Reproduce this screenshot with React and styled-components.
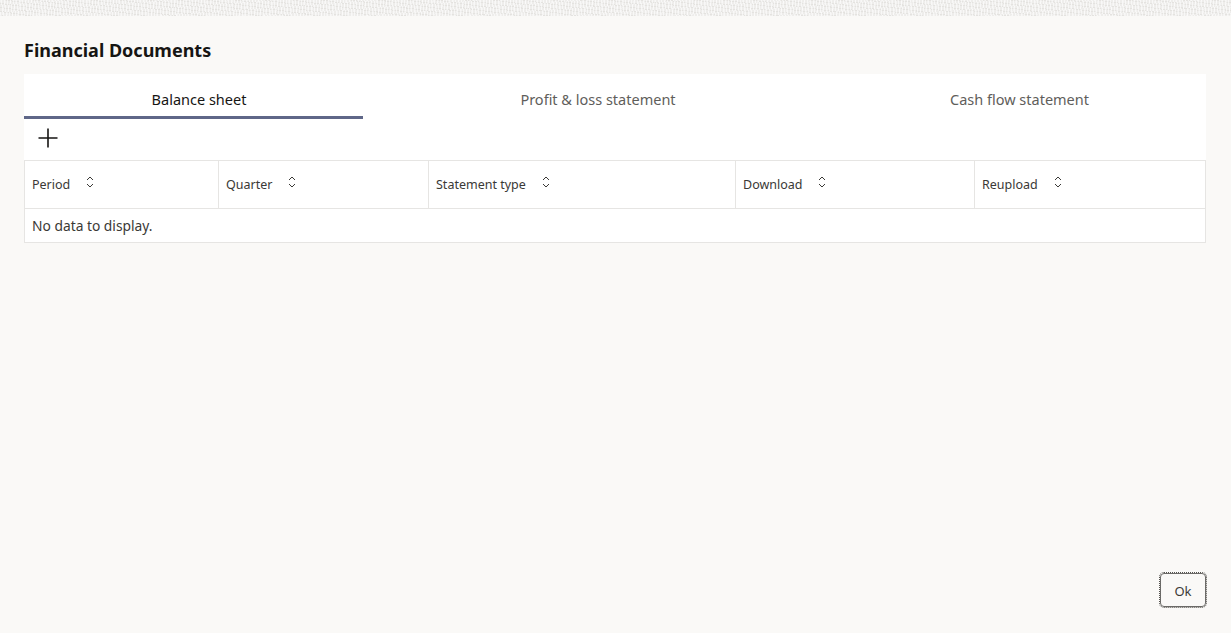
import React from 'react';
import styled, { createGlobalStyle } from 'styled-components';

const GlobalStyle = createGlobalStyle`
  html, body {
    margin: 0;
    padding: 0;
    height: 100%;
    background: #faf9f7;
    font-family: "Noto Sans", "Open Sans", sans-serif;
  }
  #root {
    height: 100%;
  }
`;

const Page = styled.div`
  height: 633px;
  display: flex;
  flex-direction: column;
  overflow: hidden;
`;

const TextureStrip = styled.div`
  height: 16px;
  flex: none;
  background-color: #eeedeb;
  background-image:
    repeating-linear-gradient(82deg, rgba(255, 255, 255, 0.6) 0 1px, transparent 1px 3px),
    repeating-linear-gradient(104deg, rgba(255, 255, 255, 0.35) 0 1px, transparent 1px 5px),
    repeating-linear-gradient(8deg, rgba(216, 214, 210, 0.45) 0 1px, transparent 1px 4px);
`;

const Body = styled.main`
  flex: 1;
  display: flex;
  flex-direction: column;
  padding: 0 25px 25px 24px;
`;

const Title = styled.h1`
  margin: 21px 0 11px;
  font-size: 18px;
  line-height: 26px;
  font-weight: 700;
  color: #161513;
`;

const Card = styled.section`
  background: #fff;
`;

const Tabs = styled.div`
  display: grid;
  grid-template-columns: 339px 470px 373px;
  height: 45px;
`;

const Tab = styled.div`
  display: flex;
  align-items: center;
  justify-content: center;
  padding-top: 8px;
  padding-left: ${(p) => (p.$active ? '11px' : '0')};
  font-size: 14.5px;
  color: ${(p) => (p.$active ? '#161513' : '#5f5e5b')};
  border-bottom: 3px solid ${(p) => (p.$active ? '#5f6788' : 'transparent')};
  box-sizing: border-box;
`;

const Toolbar = styled.div`
  height: 41px;
  box-sizing: border-box;
  padding: 0 0 3px 13px;
  display: flex;
  align-items: center;
  color: #161513;
`;

const Table = styled.div`
  display: grid;
  grid-template-columns: 193px 210px 307px 239px 1fr;
  border: 1px solid #e6e5e3;
  box-sizing: border-box;
`;

const HeaderCell = styled.div`
  height: 48px;
  box-sizing: border-box;
  display: flex;
  align-items: center;
  padding: 0 0 1px 7px;
  font-size: 12.5px;
  color: #3a3936;
  border-bottom: 1px solid #e6e5e3;
  border-left: ${(p) => (p.$first ? 'none' : '1px solid #e6e5e3')};
`;

const SortIcon = styled.svg`
  width: 10px;
  height: 14px;
  margin-left: 15px;
  margin-top: -4px;
  fill: none;
  stroke: #3a3936;
  stroke-width: 1;
`;

const EmptyRow = styled.div`
  grid-column: 1 / -1;
  height: 33px;
  display: flex;
  align-items: center;
  padding-left: 7px;
  font-size: 13.8px;
  color: #3a3936;
`;

const Footer = styled.div`
  margin-top: auto;
  display: flex;
  justify-content: flex-end;
`;

const OkButton = styled.button`
  width: 46px;
  height: 34px;
  padding: 2px 0 0;
  margin-bottom: 1px;
  background: transparent;
  border: 1px solid #6b6a67;
  border-radius: 4px;
  outline: 1px dotted #55534f;
  font-family: inherit;
  font-size: 13px;
  color: #3a3936;
`;

const columns = ['Period', 'Quarter', 'Statement type', 'Download', 'Reupload'];

const Sort = () => (
  <SortIcon viewBox="0 0 10 14">
    <path d="M2 5 L5 2 L8 5" />
    <path d="M2 9 L5 12 L8 9" />
  </SortIcon>
);

const App = () => (
  <Page>
    <GlobalStyle />
    <TextureStrip />
    <Body>
      <Title>Financial Documents</Title>
      <Card>
        <Tabs>
          <Tab $active>Balance sheet</Tab>
          <Tab>Profit &amp; loss statement</Tab>
          <Tab>Cash flow statement</Tab>
        </Tabs>
        <Toolbar>
          <svg width="22" height="22" viewBox="0 0 22 22" fill="none" stroke="currentColor" strokeWidth="1.6">
            <path d="M11 1.5 V20.5 M1.5 11 H20.5" />
          </svg>
        </Toolbar>
        <Table>
          {columns.map((label, i) => (
            <HeaderCell key={label} $first={i === 0}>
              {label}
              <Sort />
            </HeaderCell>
          ))}
          <EmptyRow>No data to display.</EmptyRow>
        </Table>
      </Card>
      <Footer>
        <OkButton>Ok</OkButton>
      </Footer>
    </Body>
  </Page>
);

export default App;
